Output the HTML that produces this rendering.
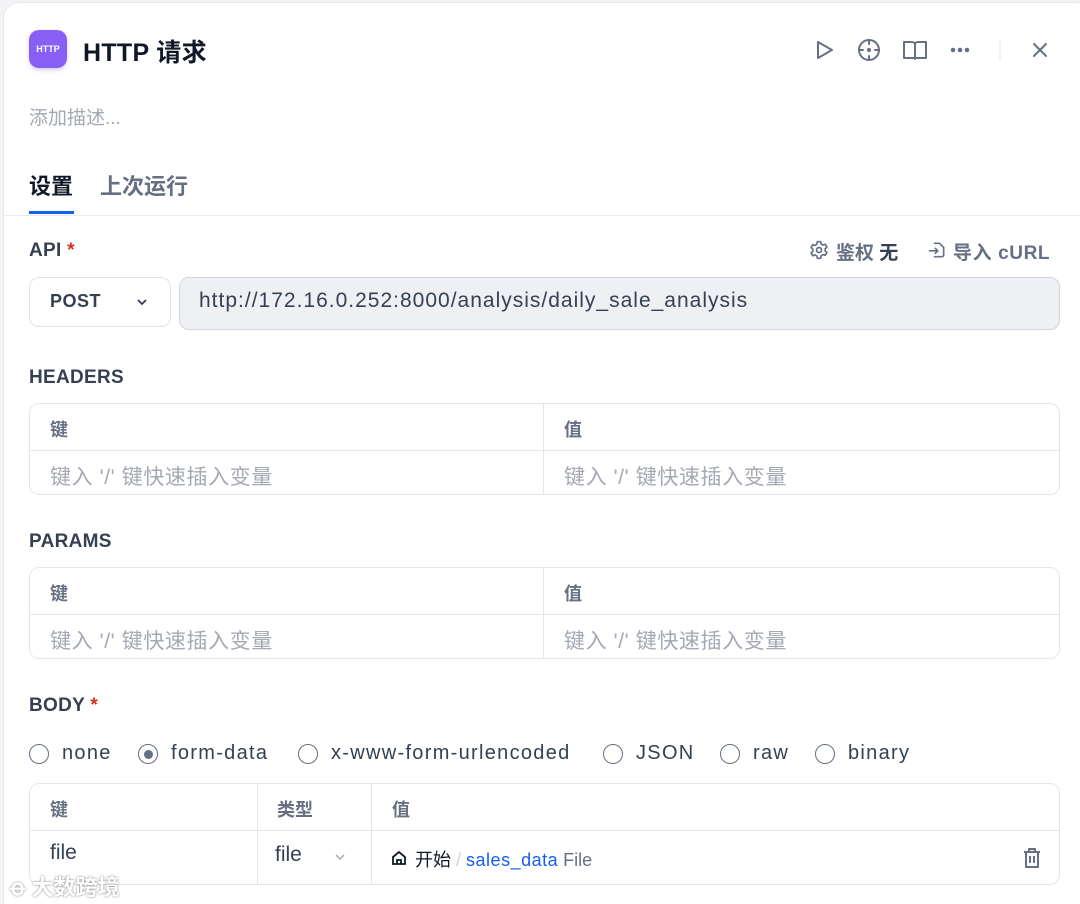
<!DOCTYPE html>
<html><head><meta charset="utf-8"><style>
*{box-sizing:border-box;margin:0;padding:0}
html,body{width:1080px;height:904px;overflow:hidden}
body{background:#f2f3f5;font-family:"Liberation Sans","Noto Sans CJK SC",sans-serif;position:relative;color:#354052}
.panel{position:absolute;left:3px;top:2px;width:1090px;height:920px;background:#fff;border-radius:16px;border:1px solid #e6e8ec}
.a{position:absolute;white-space:nowrap}
.lbl{font-size:19px;font-weight:bold;color:#354052;letter-spacing:.3px}
.tbl{position:absolute;left:29px;width:1031px;border:1px solid #e4e6ea;border-radius:10px}
.hl{position:absolute;left:0;right:0;height:1px;background:#e4e6ea}
.vl{position:absolute;top:0;bottom:0;width:1px;background:#e4e6ea}
.th{font-size:18px;color:#676f83;font-weight:bold}
.ph{font-size:21px;color:#a4a9b3;letter-spacing:.6px}
.radio{position:absolute;width:20px;height:20px;border:1.5px solid #676f83;border-radius:50%}
.rt{font-size:20px;color:#354052;letter-spacing:1.3px}
</style></head><body>
<div class="panel"></div>
<div class="a" style="left:29px;top:30px;width:38px;height:38px;border-radius:10px;background:#875ff5;box-shadow:0 2px 4px rgba(100,60,200,.25);color:#fff;font-size:9px;font-weight:bold;text-align:center;line-height:38px">HTTP</div>
<div class="a" style="left:83px;top:33px;font-size:25px;font-weight:bold;color:#101828;letter-spacing:.3px">HTTP 请求</div>
<svg class="a" style="left:812px;top:37px" width="260" height="28" viewBox="0 0 260 28" fill="none" stroke="#676f83" stroke-width="2" stroke-linecap="round" stroke-linejoin="round">
<path d="M6 5 L20 13 L6 21 Z"/>
<circle cx="57" cy="13" r="10"/><circle cx="57" cy="13" r="1" fill="#676f83"/><path d="M57 3v4M57 19v4M47 13h4M63 13h4"/>
<path d="M92 5h8a3 3 0 0 1 3 3v14M114 5h-8a3 3 0 0 0-3 3M92 5v16h22V5"/>
<circle cx="141" cy="13" r="1.3" fill="#676f83"/><circle cx="148" cy="13" r="1.3" fill="#676f83"/><circle cx="155" cy="13" r="1.3" fill="#676f83"/>
<path d="M188 5v18" stroke="#e4e6ea" stroke-width="1"/>
<path d="M222 7l12 12M234 7l-12 12"/>
</svg>
<div class="a" style="left:29px;top:103px;font-size:19px;color:#a4a9b3">添加描述...</div>
<div class="a" style="left:29px;top:169px;font-size:22px;font-weight:bold;color:#101828">设置</div>
<div class="a" style="left:100px;top:169px;font-size:22px;font-weight:bold;color:#676f83">上次运行</div>
<div class="a" style="left:29px;top:211px;width:45px;height:3px;background:#155eef"></div>
<div class="a" style="left:3px;top:215px;width:1077px;height:1px;background:#e8eaee"></div>

<div class="a lbl" style="left:29px;top:240px">API <span style="color:#d92d20">*</span></div>
<svg class="a" style="left:809px;top:240px" width="20" height="20" viewBox="0 0 24 24" fill="none" stroke="#676f83" stroke-width="2" stroke-linejoin="round"><circle cx="12" cy="12" r="3"/><path d="M10 2h4l.6 2.8 2.2 1.3 2.7-.9 2 3.4-2.1 1.9v2.6l2.1 1.9-2 3.4-2.7-.9-2.2 1.3L14 22h-4l-.6-2.8-2.2-1.3-2.7.9-2-3.4 2.1-1.9v-2.6L2.5 9l2-3.4 2.7.9 2.2-1.3z"/></svg>
<div class="a" style="left:836px;top:238px;font-size:19px;font-weight:bold;color:#676f83">鉴权 <span style="color:#354052">无</span></div>
<svg class="a" style="left:927px;top:240px" width="20" height="20" viewBox="0 0 24 24" fill="none" stroke="#676f83" stroke-width="2" stroke-linecap="round" stroke-linejoin="round"><path d="M9 4h6l5 5v9a2 2 0 0 1-2 2H9"/><path d="M3 13h10M10 10l3 3-3 3"/></svg>
<div class="a" style="left:953px;top:238px;font-size:19px;font-weight:bold;color:#676f83;letter-spacing:.6px">导入 cURL</div>

<div class="a" style="left:29px;top:277px;width:142px;height:50px;border:1px solid #dfe2e7;border-radius:10px;background:#fff"></div>
<div class="a" style="left:50px;top:291px;font-size:18px;font-weight:bold;color:#354052;letter-spacing:.5px">POST</div>
<svg class="a" style="left:135px;top:295px" width="14" height="14" viewBox="0 0 14 14" fill="none" stroke="#354052" stroke-width="1.8"><path d="M3 5l4 4 4-4"/></svg>
<div class="a" style="left:179px;top:277px;width:881px;height:53px;border:1px solid #d0d5dc;border-radius:10px;background:#eef0f4"></div>
<div class="a" style="left:199px;top:289px;font-size:21px;color:#354052;letter-spacing:1px">http://172.16.0.252:8000/analysis/daily_sale_analysis</div>

<div class="a lbl" style="left:29px;top:367px">HEADERS</div>
<div class="tbl" style="top:403px;height:92px"><div class="hl" style="top:46px"></div><div class="vl" style="left:513px"></div>
<div class="a th" style="left:20px;top:12px">键</div><div class="a th" style="left:534px;top:12px">值</div>
<div class="a ph" style="left:20px;top:57px">键入 '/' 键快速插入变量</div><div class="a ph" style="left:534px;top:57px">键入 '/' 键快速插入变量</div></div>

<div class="a lbl" style="left:29px;top:531px">PARAMS</div>
<div class="tbl" style="top:567px;height:92px"><div class="hl" style="top:46px"></div><div class="vl" style="left:513px"></div>
<div class="a th" style="left:20px;top:12px">键</div><div class="a th" style="left:534px;top:12px">值</div>
<div class="a ph" style="left:20px;top:57px">键入 '/' 键快速插入变量</div><div class="a ph" style="left:534px;top:57px">键入 '/' 键快速插入变量</div></div>

<div class="a lbl" style="left:29px;top:695px">BODY <span style="color:#d92d20">*</span></div>
<div class="radio" style="left:29px;top:744px"></div><div class="a rt" style="left:62px;top:742px">none</div>
<div class="radio" style="left:138px;top:744px"></div><div class="a" style="left:143.5px;top:749.5px;width:9px;height:9px;border-radius:50%;background:#676f83"></div><div class="a rt" style="left:171px;top:742px">form-data</div>
<div class="radio" style="left:298px;top:744px"></div><div class="a rt" style="left:331px;top:742px">x-www-form-urlencoded</div>
<div class="radio" style="left:603px;top:744px"></div><div class="a rt" style="left:636px;top:742px">JSON</div>
<div class="radio" style="left:720px;top:744px"></div><div class="a rt" style="left:753px;top:742px">raw</div>
<div class="radio" style="left:815px;top:744px"></div><div class="a rt" style="left:848px;top:742px">binary</div>

<div class="tbl" style="top:783px;height:102px"><div class="hl" style="top:46px"></div><div class="vl" style="left:227px"></div><div class="vl" style="left:341px"></div>
<div class="a th" style="left:20px;top:12px">键</div><div class="a th" style="left:247px;top:12px">类型</div><div class="a th" style="left:362px;top:12px">值</div>
<div class="a" style="left:20px;top:57px;font-size:21px;color:#354052">file</div>
<div class="a" style="left:245px;top:59px;font-size:21px;color:#354052">file</div>
<svg class="a" style="left:303px;top:66px" width="14" height="14" viewBox="0 0 14 14" fill="none" stroke="#a4a9b3" stroke-width="1.5"><path d="M3 5l4 4 4-4"/></svg>
<svg class="a" style="left:361px;top:66px" width="16" height="16" viewBox="0 0 16 16" fill="none" stroke="#101828" stroke-width="1.8"><path d="M2 7l6-5 6 5v7H2z"/><path d="M6 14v-4h4v4"/></svg>
<div class="a" style="left:385px;top:62px;font-size:18px;color:#101828">开始 <span style="color:#d0d5dc">/</span> <span style="color:#155eef;letter-spacing:.5px">sales_data</span> <span style="color:#676f83">File</span></div>
<svg class="a" style="left:990px;top:62px" width="24" height="24" viewBox="0 0 24 24" fill="none" stroke="#676f83" stroke-width="2" stroke-linejoin="round"><path d="M4 6h16M9 6V3h6v3M6 6v15h12V6M10 10v7M14 10v7"/></svg></div>

<div class="a" style="left:10px;top:870px;font-size:22px;font-weight:bold;color:#fff;text-shadow:0 0 2px #777">ꝋ 大数跨境</div>
</body></html>
